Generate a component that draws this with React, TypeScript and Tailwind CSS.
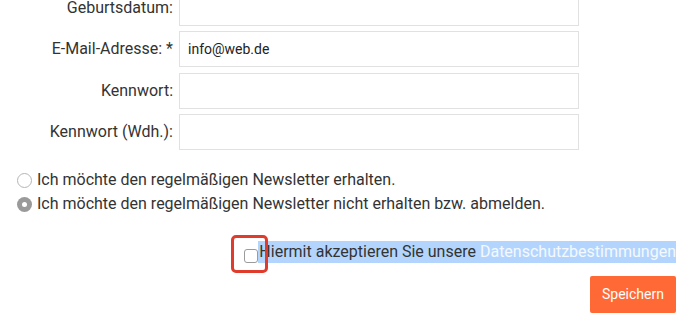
import React from "react";

const rows: { label: string; value?: string }[] = [
  { label: "Geburtsdatum:" },
  { label: "E-Mail-Adresse: *", value: "info@web.de" },
  { label: "Kennwort:" },
  { label: "Kennwort (Wdh.):" },
];

export default function App() {
  return (
    <div
      className="w-[697px] h-[333px] overflow-hidden bg-white text-[#333333] relative"
      style={{ fontFamily: "Roboto, 'Liberation Sans', sans-serif" }}
    >
      <div className="mt-[-10.2px] flex flex-col gap-[5.5px]">
        {rows.map((r) => (
          <div key={r.label} className="flex items-center">
            <div className="w-[173px] text-right text-[16px] leading-[20px] text-[#333]">
              {r.label}
            </div>
            <div className="ml-[6px] w-[400px] h-[36px] border border-[#e1e1e1] flex items-center pl-[8px] text-[14px] text-[#222]">
              {r.value}
            </div>
          </div>
        ))}
      </div>

      <div className="mt-[18px] pl-[17px] flex flex-col text-[16px] leading-[24px]">
        <div className="flex items-center">
          <span className="w-[15px] h-[15px] rounded-full border border-[#b5b5b5] bg-white" />
          <span className="ml-[5px]">Ich möchte den regelmäßigen Newsletter erhalten.</span>
        </div>
        <div className="flex items-center">
          <span className="w-[15px] h-[15px] rounded-full bg-[#9a9a9a] flex items-center justify-center">
            <span className="w-[5px] h-[5px] rounded-full bg-white" />
          </span>
          <span className="ml-[5px]">Ich möchte den regelmäßigen Newsletter nicht erhalten bzw. abmelden.</span>
        </div>
      </div>

      <div className="mt-[24px] pr-[21px] flex justify-end items-center">
        <div className="relative flex items-center">
          <span className="mt-[9px] w-[14px] h-[14px] rounded-[3px] border border-[#9b9b9b] bg-white" />
          <span className="absolute left-[-13px] top-[-5px] w-[37px] h-[38px] rounded-[5px] border-[3px] border-[#e03c2d]" />
        </div>
        <span className="text-[16px] leading-[22px] bg-[#b3d5fd] pl-[1px]">
          Hiermit akzeptieren Sie unsere <span className="text-[#f4f9ff]">Datenschutzbestimmungen</span>
        </span>
      </div>

      <div className="mt-[13px] pr-[21px] flex justify-end">
        <button className="w-[86px] h-[37px] bg-[#ff6935] text-white text-[14px] rounded-[2px]">
          Speichern
        </button>
      </div>
    </div>
  );
}
